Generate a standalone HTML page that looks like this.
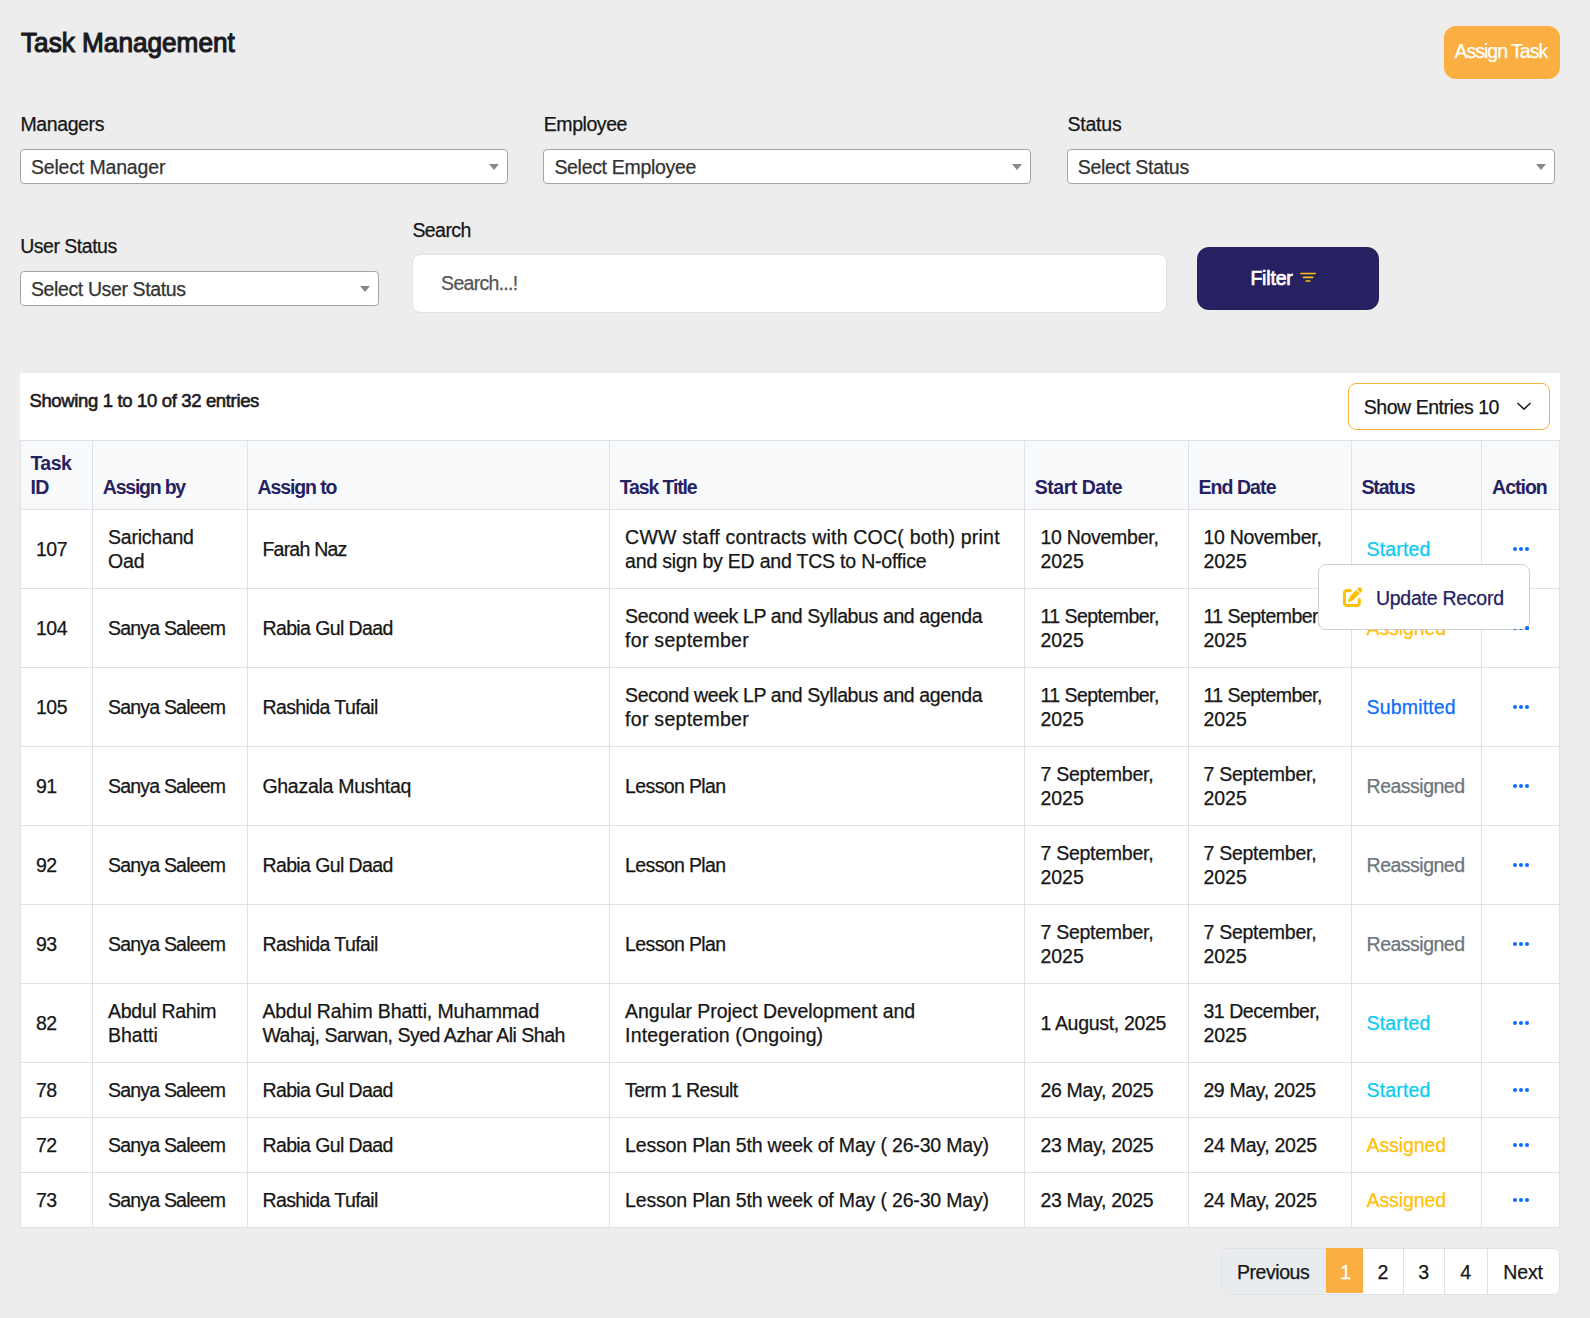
<!DOCTYPE html>
<html><head><meta charset="utf-8"><title>Task Management</title>
<style>
html,body{margin:0;padding:0}
body{width:1590px;height:1318px;background:#ededed;position:relative;overflow:hidden;font-family:"Liberation Sans",sans-serif;color:#212529}
.t{position:absolute;white-space:nowrap;-webkit-text-stroke:0.25px currentColor}
</style></head><body>
<div class="t" style="left:20.50px;top:24.82px;font-size:28.5px;line-height:34px;color:#1b1b1f;-webkit-text-stroke:1.2px currentColor;transform:scaleX(0.918);transform-origin:0 0;">Task Management</div>
<div style="position:absolute;left:1444px;top:26px;width:116px;height:53px;background:#fbaf42;border-radius:12px"></div>
<div class="t" style="left:1454.40px;top:39.24px;font-size:19.5px;line-height:24px;letter-spacing:-0.984px;color:#fff;">Assign Task</div>
<div class="t" style="left:20.40px;top:112.24px;font-size:19.5px;line-height:24px;letter-spacing:-0.382px;color:#161616;">Managers</div>
<div style="position:absolute;left:20px;top:149px;width:488px;height:35px;box-sizing:border-box;background:#fff;border:1px solid #a6a6a6;border-radius:4px"></div>
<div class="t" style="left:30.90px;top:155.24px;font-size:19.5px;line-height:24px;letter-spacing:-0.161px;color:#333;">Select Manager</div>
<div style="position:absolute;left:489px;top:164px;width:0;height:0;border-left:5px solid transparent;border-right:5px solid transparent;border-top:6px solid #888"></div>
<div class="t" style="left:543.80px;top:112.24px;font-size:19.5px;line-height:24px;letter-spacing:-0.440px;color:#161616;">Employee</div>
<div style="position:absolute;left:543px;top:149px;width:488px;height:35px;box-sizing:border-box;background:#fff;border:1px solid #a6a6a6;border-radius:4px"></div>
<div class="t" style="left:554.40px;top:155.24px;font-size:19.5px;line-height:24px;letter-spacing:-0.311px;color:#333;">Select Employee</div>
<div style="position:absolute;left:1012px;top:164px;width:0;height:0;border-left:5px solid transparent;border-right:5px solid transparent;border-top:6px solid #888"></div>
<div class="t" style="left:1067.40px;top:112.24px;font-size:19.5px;line-height:24px;letter-spacing:-0.197px;color:#161616;">Status</div>
<div style="position:absolute;left:1067px;top:149px;width:488px;height:35px;box-sizing:border-box;background:#fff;border:1px solid #a6a6a6;border-radius:4px"></div>
<div class="t" style="left:1077.70px;top:155.24px;font-size:19.5px;line-height:24px;letter-spacing:-0.288px;color:#333;">Select Status</div>
<div style="position:absolute;left:1536px;top:164px;width:0;height:0;border-left:5px solid transparent;border-right:5px solid transparent;border-top:6px solid #888"></div>
<div class="t" style="left:20.20px;top:234.24px;font-size:19.5px;line-height:24px;letter-spacing:-0.489px;color:#161616;">User Status</div>
<div style="position:absolute;left:20px;top:271px;width:359px;height:35px;box-sizing:border-box;background:#fff;border:1px solid #a6a6a6;border-radius:4px"></div>
<div class="t" style="left:30.90px;top:277.24px;font-size:19.5px;line-height:24px;letter-spacing:-0.374px;color:#333;">Select User Status</div>
<div style="position:absolute;left:360px;top:286px;width:0;height:0;border-left:5px solid transparent;border-right:5px solid transparent;border-top:6px solid #888"></div>
<div class="t" style="left:412.40px;top:217.74px;font-size:19.5px;line-height:24px;letter-spacing:-0.563px;color:#161616;">Search</div>
<div style="position:absolute;left:412px;top:254px;width:755px;height:59px;box-sizing:border-box;background:#fff;border:1px solid #dfe3e8;border-radius:8px"></div>
<div class="t" style="left:441.10px;top:271.24px;font-size:19.5px;line-height:24px;letter-spacing:-0.707px;color:#555;">Search...!</div>
<div style="position:absolute;left:1197px;top:247px;width:182px;height:63px;background:#262262;border-radius:12px"></div>
<div class="t" style="left:1250.40px;top:265.74px;font-size:19.5px;line-height:24px;letter-spacing:-0.178px;color:#fff;-webkit-text-stroke:0.7px currentColor;">Filter</div>
<svg style="position:absolute;left:1294px;top:266px" width="28" height="24" viewBox="0 0 28 24"><g stroke="#ffc107" stroke-width="1.6" stroke-linecap="round"><line x1="6.8" y1="7.55" x2="21.2" y2="7.55"/><line x1="9.4" y1="11.4" x2="18.8" y2="11.4"/><line x1="12.1" y1="15" x2="15.9" y2="15"/></g></svg>
<div style="position:absolute;left:20px;top:373px;width:1540px;height:855px;background:#fff"></div>
<div class="t" style="left:29.40px;top:388.59px;font-size:18.5px;line-height:24px;letter-spacing:-0.345px;color:#1b1b1f;-webkit-text-stroke:0.6px currentColor;">Showing 1 to 10 of 32 entries</div>
<div style="position:absolute;left:1348px;top:383px;width:202px;height:47px;box-sizing:border-box;border:1px solid #fbaf42;border-radius:8px;background:#fff"></div>
<div class="t" style="left:1363.70px;top:395.24px;font-size:19.5px;line-height:24px;letter-spacing:-0.447px;color:#161616;">Show Entries 10</div>
<svg style="position:absolute;left:1515px;top:400px" width="18" height="12" viewBox="0 0 18 12"><path d="M2.5 3 L9 9.2 L15.5 3" fill="none" stroke="#212529" stroke-width="1.6"/></svg>
<div style="position:absolute;left:20px;top:440px;width:1540px;height:69px;background:#f8f9fa"></div>
<div style="position:absolute;left:20px;top:440px;width:1540px;height:1px;background:#dee2e6"></div>
<div style="position:absolute;left:20px;top:509px;width:1540px;height:1px;background:#dee2e6"></div>
<div style="position:absolute;left:20px;top:588px;width:1540px;height:1px;background:#dee2e6"></div>
<div style="position:absolute;left:20px;top:667px;width:1540px;height:1px;background:#dee2e6"></div>
<div style="position:absolute;left:20px;top:746px;width:1540px;height:1px;background:#dee2e6"></div>
<div style="position:absolute;left:20px;top:825px;width:1540px;height:1px;background:#dee2e6"></div>
<div style="position:absolute;left:20px;top:904px;width:1540px;height:1px;background:#dee2e6"></div>
<div style="position:absolute;left:20px;top:983px;width:1540px;height:1px;background:#dee2e6"></div>
<div style="position:absolute;left:20px;top:1062px;width:1540px;height:1px;background:#dee2e6"></div>
<div style="position:absolute;left:20px;top:1117px;width:1540px;height:1px;background:#dee2e6"></div>
<div style="position:absolute;left:20px;top:1172px;width:1540px;height:1px;background:#dee2e6"></div>
<div style="position:absolute;left:20px;top:1227px;width:1540px;height:1px;background:#dee2e6"></div>
<div style="position:absolute;left:20px;top:440px;width:1px;height:788px;background:#dee2e6"></div>
<div style="position:absolute;left:92px;top:440px;width:1px;height:788px;background:#dee2e6"></div>
<div style="position:absolute;left:247px;top:440px;width:1px;height:788px;background:#dee2e6"></div>
<div style="position:absolute;left:609px;top:440px;width:1px;height:788px;background:#dee2e6"></div>
<div style="position:absolute;left:1024px;top:440px;width:1px;height:788px;background:#dee2e6"></div>
<div style="position:absolute;left:1188px;top:440px;width:1px;height:788px;background:#dee2e6"></div>
<div style="position:absolute;left:1351px;top:440px;width:1px;height:788px;background:#dee2e6"></div>
<div style="position:absolute;left:1481px;top:440px;width:1px;height:788px;background:#dee2e6"></div>
<div style="position:absolute;left:1559px;top:440px;width:1px;height:788px;background:#dee2e6"></div>
<div class="t" style="left:30.40px;top:451.24px;font-size:19.5px;line-height:24px;font-weight:700;-webkit-text-stroke:0;letter-spacing:-0.500px;color:#262262;">Task</div>
<div class="t" style="left:30.40px;top:475.24px;font-size:19.5px;line-height:24px;font-weight:700;-webkit-text-stroke:0;letter-spacing:-0.500px;color:#262262;">ID</div>
<div class="t" style="left:102.80px;top:475.24px;font-size:19.5px;line-height:24px;font-weight:700;-webkit-text-stroke:0;letter-spacing:-1.226px;color:#262262;">Assign by</div>
<div class="t" style="left:257.50px;top:475.24px;font-size:19.5px;line-height:24px;font-weight:700;-webkit-text-stroke:0;letter-spacing:-1.103px;color:#262262;">Assign to</div>
<div class="t" style="left:619.80px;top:475.24px;font-size:19.5px;line-height:24px;font-weight:700;-webkit-text-stroke:0;letter-spacing:-1.138px;color:#262262;">Task Title</div>
<div class="t" style="left:1034.80px;top:475.24px;font-size:19.5px;line-height:24px;font-weight:700;-webkit-text-stroke:0;letter-spacing:-0.482px;color:#262262;">Start Date</div>
<div class="t" style="left:1198.40px;top:475.24px;font-size:19.5px;line-height:24px;font-weight:700;-webkit-text-stroke:0;letter-spacing:-0.919px;color:#262262;">End Date</div>
<div class="t" style="left:1361.40px;top:475.24px;font-size:19.5px;line-height:24px;font-weight:700;-webkit-text-stroke:0;letter-spacing:-1.055px;color:#262262;">Status</div>
<div class="t" style="left:1492.10px;top:475.24px;font-size:19.5px;line-height:24px;font-weight:700;-webkit-text-stroke:0;letter-spacing:-1.009px;color:#262262;">Action</div>
<div class="t" style="left:36.00px;top:537.24px;font-size:19.5px;line-height:24px;letter-spacing:-0.500px;color:#161616;">107</div>
<div class="t" style="left:108.00px;top:525.24px;font-size:19.5px;line-height:24px;letter-spacing:-0.231px;color:#161616;">Sarichand</div>
<div class="t" style="left:108.00px;top:549.24px;font-size:19.5px;line-height:24px;letter-spacing:-0.077px;color:#161616;">Oad</div>
<div class="t" style="left:262.40px;top:537.24px;font-size:19.5px;line-height:24px;letter-spacing:-0.758px;color:#161616;">Farah Naz</div>
<div class="t" style="left:625.10px;top:525.24px;font-size:19.5px;line-height:24px;letter-spacing:0.215px;color:#161616;">CWW staff contracts with COC( both) print</div>
<div class="t" style="left:625.10px;top:549.24px;font-size:19.5px;line-height:24px;letter-spacing:-0.203px;color:#161616;">and sign by ED and TCS to N-office</div>
<div class="t" style="left:1040.40px;top:525.24px;font-size:19.5px;line-height:24px;letter-spacing:-0.272px;color:#161616;">10 November,</div>
<div class="t" style="left:1040.40px;top:549.24px;font-size:19.5px;line-height:24px;color:#161616;">2025</div>
<div class="t" style="left:1203.40px;top:525.24px;font-size:19.5px;line-height:24px;letter-spacing:-0.272px;color:#161616;">10 November,</div>
<div class="t" style="left:1203.40px;top:549.24px;font-size:19.5px;line-height:24px;color:#161616;">2025</div>
<div class="t" style="left:1366.60px;top:537.24px;font-size:19.5px;line-height:24px;letter-spacing:0.152px;color:#0dcaf0;">Started</div>
<div style="position:absolute;left:1512.5px;top:547.0px;width:4px;height:4px;border-radius:50%;background:#0d6efd"></div>
<div style="position:absolute;left:1518.7px;top:547.0px;width:4px;height:4px;border-radius:50%;background:#0d6efd"></div>
<div style="position:absolute;left:1524.9px;top:547.0px;width:4px;height:4px;border-radius:50%;background:#0d6efd"></div>
<div class="t" style="left:36.00px;top:616.24px;font-size:19.5px;line-height:24px;letter-spacing:-0.500px;color:#161616;">104</div>
<div class="t" style="left:108.00px;top:616.24px;font-size:19.5px;line-height:24px;letter-spacing:-0.804px;color:#161616;">Sanya Saleem</div>
<div class="t" style="left:262.40px;top:616.24px;font-size:19.5px;line-height:24px;letter-spacing:-0.596px;color:#161616;">Rabia Gul Daad</div>
<div class="t" style="left:625.10px;top:604.24px;font-size:19.5px;line-height:24px;letter-spacing:-0.380px;color:#161616;">Second week LP and Syllabus and agenda</div>
<div class="t" style="left:625.10px;top:628.24px;font-size:19.5px;line-height:24px;letter-spacing:0.274px;color:#161616;">for september</div>
<div class="t" style="left:1040.40px;top:604.24px;font-size:19.5px;line-height:24px;letter-spacing:-0.540px;color:#161616;">11 September,</div>
<div class="t" style="left:1040.40px;top:628.24px;font-size:19.5px;line-height:24px;color:#161616;">2025</div>
<div class="t" style="left:1203.40px;top:604.24px;font-size:19.5px;line-height:24px;letter-spacing:-0.540px;color:#161616;">11 September,</div>
<div class="t" style="left:1203.40px;top:628.24px;font-size:19.5px;line-height:24px;color:#161616;">2025</div>
<div class="t" style="left:1366.60px;top:616.24px;font-size:19.5px;line-height:24px;letter-spacing:-0.120px;color:#ffc107;">Assigned</div>
<div style="position:absolute;left:1512.5px;top:626.0px;width:4px;height:4px;border-radius:50%;background:#0d6efd"></div>
<div style="position:absolute;left:1518.7px;top:626.0px;width:4px;height:4px;border-radius:50%;background:#0d6efd"></div>
<div style="position:absolute;left:1524.9px;top:626.0px;width:4px;height:4px;border-radius:50%;background:#0d6efd"></div>
<div class="t" style="left:36.00px;top:695.24px;font-size:19.5px;line-height:24px;letter-spacing:-0.500px;color:#161616;">105</div>
<div class="t" style="left:108.00px;top:695.24px;font-size:19.5px;line-height:24px;letter-spacing:-0.804px;color:#161616;">Sanya Saleem</div>
<div class="t" style="left:262.40px;top:695.24px;font-size:19.5px;line-height:24px;letter-spacing:-0.579px;color:#161616;">Rashida Tufail</div>
<div class="t" style="left:625.10px;top:683.24px;font-size:19.5px;line-height:24px;letter-spacing:-0.380px;color:#161616;">Second week LP and Syllabus and agenda</div>
<div class="t" style="left:625.10px;top:707.24px;font-size:19.5px;line-height:24px;letter-spacing:0.274px;color:#161616;">for september</div>
<div class="t" style="left:1040.40px;top:683.24px;font-size:19.5px;line-height:24px;letter-spacing:-0.540px;color:#161616;">11 September,</div>
<div class="t" style="left:1040.40px;top:707.24px;font-size:19.5px;line-height:24px;color:#161616;">2025</div>
<div class="t" style="left:1203.40px;top:683.24px;font-size:19.5px;line-height:24px;letter-spacing:-0.540px;color:#161616;">11 September,</div>
<div class="t" style="left:1203.40px;top:707.24px;font-size:19.5px;line-height:24px;color:#161616;">2025</div>
<div class="t" style="left:1366.60px;top:695.24px;font-size:19.5px;line-height:24px;letter-spacing:0.157px;color:#0d6efd;">Submitted</div>
<div style="position:absolute;left:1512.5px;top:705.0px;width:4px;height:4px;border-radius:50%;background:#0d6efd"></div>
<div style="position:absolute;left:1518.7px;top:705.0px;width:4px;height:4px;border-radius:50%;background:#0d6efd"></div>
<div style="position:absolute;left:1524.9px;top:705.0px;width:4px;height:4px;border-radius:50%;background:#0d6efd"></div>
<div class="t" style="left:36.00px;top:774.24px;font-size:19.5px;line-height:24px;letter-spacing:-0.500px;color:#161616;">91</div>
<div class="t" style="left:108.00px;top:774.24px;font-size:19.5px;line-height:24px;letter-spacing:-0.804px;color:#161616;">Sanya Saleem</div>
<div class="t" style="left:262.40px;top:774.24px;font-size:19.5px;line-height:24px;letter-spacing:-0.277px;color:#161616;">Ghazala Mushtaq</div>
<div class="t" style="left:625.10px;top:774.24px;font-size:19.5px;line-height:24px;letter-spacing:-0.635px;color:#161616;">Lesson Plan</div>
<div class="t" style="left:1040.40px;top:762.24px;font-size:19.5px;line-height:24px;letter-spacing:-0.257px;color:#161616;">7 September,</div>
<div class="t" style="left:1040.40px;top:786.24px;font-size:19.5px;line-height:24px;color:#161616;">2025</div>
<div class="t" style="left:1203.40px;top:762.24px;font-size:19.5px;line-height:24px;letter-spacing:-0.257px;color:#161616;">7 September,</div>
<div class="t" style="left:1203.40px;top:786.24px;font-size:19.5px;line-height:24px;color:#161616;">2025</div>
<div class="t" style="left:1366.60px;top:774.24px;font-size:19.5px;line-height:24px;letter-spacing:-0.507px;color:#6c757d;">Reassigned</div>
<div style="position:absolute;left:1512.5px;top:784.0px;width:4px;height:4px;border-radius:50%;background:#0d6efd"></div>
<div style="position:absolute;left:1518.7px;top:784.0px;width:4px;height:4px;border-radius:50%;background:#0d6efd"></div>
<div style="position:absolute;left:1524.9px;top:784.0px;width:4px;height:4px;border-radius:50%;background:#0d6efd"></div>
<div class="t" style="left:36.00px;top:853.24px;font-size:19.5px;line-height:24px;letter-spacing:-0.500px;color:#161616;">92</div>
<div class="t" style="left:108.00px;top:853.24px;font-size:19.5px;line-height:24px;letter-spacing:-0.804px;color:#161616;">Sanya Saleem</div>
<div class="t" style="left:262.40px;top:853.24px;font-size:19.5px;line-height:24px;letter-spacing:-0.596px;color:#161616;">Rabia Gul Daad</div>
<div class="t" style="left:625.10px;top:853.24px;font-size:19.5px;line-height:24px;letter-spacing:-0.635px;color:#161616;">Lesson Plan</div>
<div class="t" style="left:1040.40px;top:841.24px;font-size:19.5px;line-height:24px;letter-spacing:-0.257px;color:#161616;">7 September,</div>
<div class="t" style="left:1040.40px;top:865.24px;font-size:19.5px;line-height:24px;color:#161616;">2025</div>
<div class="t" style="left:1203.40px;top:841.24px;font-size:19.5px;line-height:24px;letter-spacing:-0.257px;color:#161616;">7 September,</div>
<div class="t" style="left:1203.40px;top:865.24px;font-size:19.5px;line-height:24px;color:#161616;">2025</div>
<div class="t" style="left:1366.60px;top:853.24px;font-size:19.5px;line-height:24px;letter-spacing:-0.507px;color:#6c757d;">Reassigned</div>
<div style="position:absolute;left:1512.5px;top:863.0px;width:4px;height:4px;border-radius:50%;background:#0d6efd"></div>
<div style="position:absolute;left:1518.7px;top:863.0px;width:4px;height:4px;border-radius:50%;background:#0d6efd"></div>
<div style="position:absolute;left:1524.9px;top:863.0px;width:4px;height:4px;border-radius:50%;background:#0d6efd"></div>
<div class="t" style="left:36.00px;top:932.24px;font-size:19.5px;line-height:24px;letter-spacing:-0.500px;color:#161616;">93</div>
<div class="t" style="left:108.00px;top:932.24px;font-size:19.5px;line-height:24px;letter-spacing:-0.804px;color:#161616;">Sanya Saleem</div>
<div class="t" style="left:262.40px;top:932.24px;font-size:19.5px;line-height:24px;letter-spacing:-0.579px;color:#161616;">Rashida Tufail</div>
<div class="t" style="left:625.10px;top:932.24px;font-size:19.5px;line-height:24px;letter-spacing:-0.635px;color:#161616;">Lesson Plan</div>
<div class="t" style="left:1040.40px;top:920.24px;font-size:19.5px;line-height:24px;letter-spacing:-0.257px;color:#161616;">7 September,</div>
<div class="t" style="left:1040.40px;top:944.24px;font-size:19.5px;line-height:24px;color:#161616;">2025</div>
<div class="t" style="left:1203.40px;top:920.24px;font-size:19.5px;line-height:24px;letter-spacing:-0.257px;color:#161616;">7 September,</div>
<div class="t" style="left:1203.40px;top:944.24px;font-size:19.5px;line-height:24px;color:#161616;">2025</div>
<div class="t" style="left:1366.60px;top:932.24px;font-size:19.5px;line-height:24px;letter-spacing:-0.507px;color:#6c757d;">Reassigned</div>
<div style="position:absolute;left:1512.5px;top:942.0px;width:4px;height:4px;border-radius:50%;background:#0d6efd"></div>
<div style="position:absolute;left:1518.7px;top:942.0px;width:4px;height:4px;border-radius:50%;background:#0d6efd"></div>
<div style="position:absolute;left:1524.9px;top:942.0px;width:4px;height:4px;border-radius:50%;background:#0d6efd"></div>
<div class="t" style="left:36.00px;top:1011.24px;font-size:19.5px;line-height:24px;letter-spacing:-0.500px;color:#161616;">82</div>
<div class="t" style="left:108.00px;top:999.24px;font-size:19.5px;line-height:24px;letter-spacing:-0.314px;color:#161616;">Abdul Rahim</div>
<div class="t" style="left:108.00px;top:1023.24px;font-size:19.5px;line-height:24px;color:#161616;">Bhatti</div>
<div class="t" style="left:262.40px;top:999.24px;font-size:19.5px;line-height:24px;letter-spacing:-0.137px;color:#161616;">Abdul Rahim Bhatti, Muhammad</div>
<div class="t" style="left:262.40px;top:1023.24px;font-size:19.5px;line-height:24px;letter-spacing:-0.485px;color:#161616;">Wahaj, Sarwan, Syed Azhar Ali Shah</div>
<div class="t" style="left:625.10px;top:999.24px;font-size:19.5px;line-height:24px;letter-spacing:-0.054px;color:#161616;">Angular Project Development and</div>
<div class="t" style="left:625.10px;top:1023.24px;font-size:19.5px;line-height:24px;letter-spacing:0.138px;color:#161616;">Integeration (Ongoing)</div>
<div class="t" style="left:1040.40px;top:1011.24px;font-size:19.5px;line-height:24px;letter-spacing:-0.320px;color:#161616;">1 August, 2025</div>
<div class="t" style="left:1203.40px;top:999.24px;font-size:19.5px;line-height:24px;letter-spacing:-0.444px;color:#161616;">31 December,</div>
<div class="t" style="left:1203.40px;top:1023.24px;font-size:19.5px;line-height:24px;color:#161616;">2025</div>
<div class="t" style="left:1366.60px;top:1011.24px;font-size:19.5px;line-height:24px;letter-spacing:0.152px;color:#0dcaf0;">Started</div>
<div style="position:absolute;left:1512.5px;top:1021.0px;width:4px;height:4px;border-radius:50%;background:#0d6efd"></div>
<div style="position:absolute;left:1518.7px;top:1021.0px;width:4px;height:4px;border-radius:50%;background:#0d6efd"></div>
<div style="position:absolute;left:1524.9px;top:1021.0px;width:4px;height:4px;border-radius:50%;background:#0d6efd"></div>
<div class="t" style="left:36.00px;top:1078.24px;font-size:19.5px;line-height:24px;letter-spacing:-0.500px;color:#161616;">78</div>
<div class="t" style="left:108.00px;top:1078.24px;font-size:19.5px;line-height:24px;letter-spacing:-0.804px;color:#161616;">Sanya Saleem</div>
<div class="t" style="left:262.40px;top:1078.24px;font-size:19.5px;line-height:24px;letter-spacing:-0.596px;color:#161616;">Rabia Gul Daad</div>
<div class="t" style="left:625.10px;top:1078.24px;font-size:19.5px;line-height:24px;letter-spacing:-0.593px;color:#161616;">Term 1 Result</div>
<div class="t" style="left:1040.40px;top:1078.24px;font-size:19.5px;line-height:24px;letter-spacing:-0.319px;color:#161616;">26 May, 2025</div>
<div class="t" style="left:1203.40px;top:1078.24px;font-size:19.5px;line-height:24px;letter-spacing:-0.364px;color:#161616;">29 May, 2025</div>
<div class="t" style="left:1366.60px;top:1078.24px;font-size:19.5px;line-height:24px;letter-spacing:0.152px;color:#0dcaf0;">Started</div>
<div style="position:absolute;left:1512.5px;top:1088.0px;width:4px;height:4px;border-radius:50%;background:#0d6efd"></div>
<div style="position:absolute;left:1518.7px;top:1088.0px;width:4px;height:4px;border-radius:50%;background:#0d6efd"></div>
<div style="position:absolute;left:1524.9px;top:1088.0px;width:4px;height:4px;border-radius:50%;background:#0d6efd"></div>
<div class="t" style="left:36.00px;top:1133.24px;font-size:19.5px;line-height:24px;letter-spacing:-0.500px;color:#161616;">72</div>
<div class="t" style="left:108.00px;top:1133.24px;font-size:19.5px;line-height:24px;letter-spacing:-0.804px;color:#161616;">Sanya Saleem</div>
<div class="t" style="left:262.40px;top:1133.24px;font-size:19.5px;line-height:24px;letter-spacing:-0.596px;color:#161616;">Rabia Gul Daad</div>
<div class="t" style="left:625.10px;top:1133.24px;font-size:19.5px;line-height:24px;letter-spacing:-0.172px;color:#161616;">Lesson Plan 5th week of May ( 26-30 May)</div>
<div class="t" style="left:1040.40px;top:1133.24px;font-size:19.5px;line-height:24px;letter-spacing:-0.319px;color:#161616;">23 May, 2025</div>
<div class="t" style="left:1203.40px;top:1133.24px;font-size:19.5px;line-height:24px;letter-spacing:-0.273px;color:#161616;">24 May, 2025</div>
<div class="t" style="left:1366.60px;top:1133.24px;font-size:19.5px;line-height:24px;letter-spacing:-0.120px;color:#ffc107;">Assigned</div>
<div style="position:absolute;left:1512.5px;top:1143.0px;width:4px;height:4px;border-radius:50%;background:#0d6efd"></div>
<div style="position:absolute;left:1518.7px;top:1143.0px;width:4px;height:4px;border-radius:50%;background:#0d6efd"></div>
<div style="position:absolute;left:1524.9px;top:1143.0px;width:4px;height:4px;border-radius:50%;background:#0d6efd"></div>
<div class="t" style="left:36.00px;top:1188.24px;font-size:19.5px;line-height:24px;letter-spacing:-0.500px;color:#161616;">73</div>
<div class="t" style="left:108.00px;top:1188.24px;font-size:19.5px;line-height:24px;letter-spacing:-0.804px;color:#161616;">Sanya Saleem</div>
<div class="t" style="left:262.40px;top:1188.24px;font-size:19.5px;line-height:24px;letter-spacing:-0.579px;color:#161616;">Rashida Tufail</div>
<div class="t" style="left:625.10px;top:1188.24px;font-size:19.5px;line-height:24px;letter-spacing:-0.172px;color:#161616;">Lesson Plan 5th week of May ( 26-30 May)</div>
<div class="t" style="left:1040.40px;top:1188.24px;font-size:19.5px;line-height:24px;letter-spacing:-0.319px;color:#161616;">23 May, 2025</div>
<div class="t" style="left:1203.40px;top:1188.24px;font-size:19.5px;line-height:24px;letter-spacing:-0.273px;color:#161616;">24 May, 2025</div>
<div class="t" style="left:1366.60px;top:1188.24px;font-size:19.5px;line-height:24px;letter-spacing:-0.120px;color:#ffc107;">Assigned</div>
<div style="position:absolute;left:1512.5px;top:1198.0px;width:4px;height:4px;border-radius:50%;background:#0d6efd"></div>
<div style="position:absolute;left:1518.7px;top:1198.0px;width:4px;height:4px;border-radius:50%;background:#0d6efd"></div>
<div style="position:absolute;left:1524.9px;top:1198.0px;width:4px;height:4px;border-radius:50%;background:#0d6efd"></div>
<div style="position:absolute;left:1318px;top:564px;width:212px;height:66px;box-sizing:border-box;background:#fff;border:1px solid #cfcfcf;border-radius:8px"></div>
<svg style="position:absolute;left:1338px;top:582px" width="30" height="30" viewBox="0 0 30 30"><path d="M12.3 8.6 H8.9 A2.5 2.5 0 0 0 6.4 11.1 V20.9 A2.5 2.5 0 0 0 8.9 23.4 H18.8 A2.5 2.5 0 0 0 21.3 20.9 V17.4" fill="none" stroke="#ffc107" stroke-width="3" stroke-linecap="round"/><path d="M18.3 7.9 L21.8 11.5 L15.6 17.7 Q12.8 19.9 10 20.3 Q10.3 17.3 12.4 13.8 Z" fill="#ffc107"/><path d="M19.0 7.2 L22.5 10.8 L23.6 9.7 A2.5 2.5 0 0 0 20.1 6.1 Z" fill="#ffc107"/></svg>
<div class="t" style="left:1375.90px;top:585.54px;font-size:19.5px;line-height:24px;letter-spacing:-0.253px;color:#262262;">Update Record</div>
<div style="position:absolute;left:1500px;top:629px;width:40px;height:4px;overflow:hidden"><div style="position:absolute;left:12.5px;top:-3.0px;width:4px;height:4px;border-radius:50%;background:#0d6efd"></div><div style="position:absolute;left:18.7px;top:-3.0px;width:4px;height:4px;border-radius:50%;background:#0d6efd"></div><div style="position:absolute;left:24.9px;top:-3.0px;width:4px;height:4px;border-radius:50%;background:#0d6efd"></div></div>
<div style="position:absolute;left:1524px;top:624px;width:10px;height:8px;overflow:hidden"><div style="position:absolute;left:0.9px;top:2.0px;width:4px;height:4px;border-radius:50%;background:#0d6efd"></div></div>
<div style="position:absolute;left:1221px;top:1248px;width:339px;height:47px;box-sizing:border-box;border:1px solid #dee2e6;border-radius:7px;background:#fff;overflow:hidden"></div>
<div style="position:absolute;left:1222px;top:1249px;width:104px;height:45px;background:#e9ecef;border-radius:6px 0 0 6px"></div>
<div style="position:absolute;left:1326px;top:1248px;width:37px;height:45px;background:#fbaf42"></div>
<div style="position:absolute;left:1403px;top:1249px;width:1px;height:45px;background:#dee2e6"></div>
<div style="position:absolute;left:1444px;top:1249px;width:1px;height:45px;background:#dee2e6"></div>
<div style="position:absolute;left:1487px;top:1249px;width:1px;height:45px;background:#dee2e6"></div>
<div class="t" style="left:1237.00px;top:1260.24px;font-size:19.5px;line-height:24px;letter-spacing:-0.451px;color:#161616;">Previous</div>
<div class="t" style="left:1340.30px;top:1260.24px;font-size:19.5px;line-height:24px;color:#fff;">1</div>
<div class="t" style="left:1377.40px;top:1260.24px;font-size:19.5px;line-height:24px;color:#161616;">2</div>
<div class="t" style="left:1418.20px;top:1260.24px;font-size:19.5px;line-height:24px;color:#161616;">3</div>
<div class="t" style="left:1460.30px;top:1260.24px;font-size:19.5px;line-height:24px;color:#161616;">4</div>
<div class="t" style="left:1503.30px;top:1260.24px;font-size:19.5px;line-height:24px;letter-spacing:-0.157px;color:#161616;">Next</div>
</body></html>
